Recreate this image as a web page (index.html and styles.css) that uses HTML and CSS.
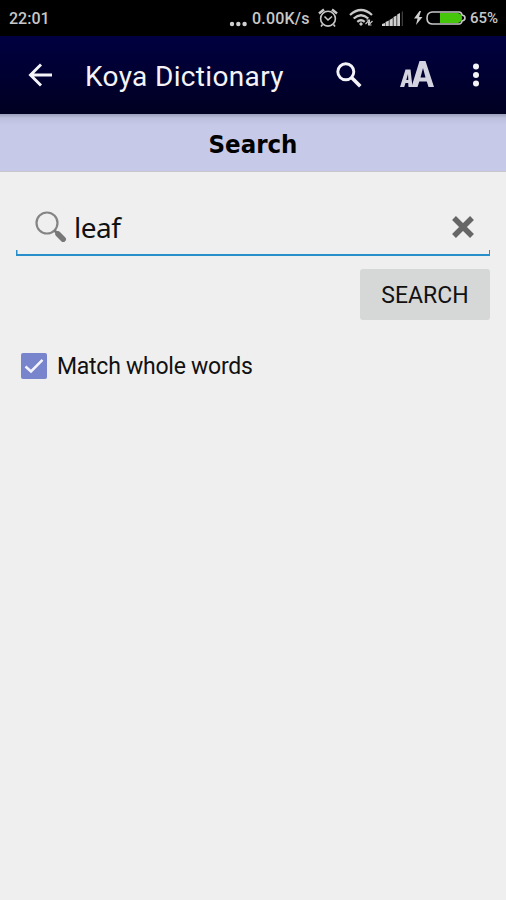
FILE: index.html
```html
<!DOCTYPE html>
<html lang="en">
    <head>
        <meta charset="utf-8">
        <title>Koya Dictionary</title>
        <link rel="stylesheet" href="styles.css">
    </head>
    <body>
        <div class="status">
            <span class="time">22:01</span>
            <svg class="dots" width="18" height="6" viewBox="0 0 18 6" fill="#d0d0d0">
                <circle cx="3" cy="3" r="2.2"/><circle cx="9.3" cy="3" r="2.2"/><circle cx="15.6" cy="3" r="2.2"/>
            </svg>
            <span class="speed">0.00K/s</span>
            <svg class="alarm" width="20" height="20" viewBox="0 0 20 20" fill="none" stroke="#c8c8c8" stroke-width="1.6">
                <circle cx="10" cy="10.7" r="7.4"/>
                <path d="M6.5 8.500l3.5 3.5 4-3.500M4.500 16.500L3 18.500M15.500 16.500l1.500 2"/>
                <path d="M1 5.500L6 1.500M19 5.500L14 1.500" stroke-width="2.500"/>
            </svg>
            <svg class="wifi" width="26" height="20" viewBox="0 0 26 20" fill="none" stroke="#c8c8c8" stroke-width="2.3">
                <path d="M1 7Q12 -3 23 7M4.7 10.5Q12 4 19.3 10.5M8.3 13.8Q12 10.7 15.7 13.8"/>
                <circle cx="12" cy="16" r="1.2" fill="#c8c8c8" stroke-width="1"/>
                <path d="M16.500 16l4-4M17.500 12h3v3M19.500 17l4-4M19.500 14v3h3" stroke-width="1.1"/>
            </svg>
            <svg class="signal" width="22" height="16" viewBox="0 0 22 16" fill="#d0d0d0">
                <path d="M0 15v-2l3-1v3zM3.500 15v-4l3.300-1.500V15zM7.500 15V9l3.300-2v8zM11.500 15V6l3-1.500V15zM15.200 15V3.500L18 2v13z"/>
                <path d="M19.7 15V1L21 0v15z" fill="#3c3c3c"/>
            </svg>
            <svg class="bolt" width="9" height="14" viewBox="0 0 9 14" fill="#d0d0d0"><path d="M5.5 0L0 7.5h3.5L2 14l6.5-8H5L7 0z"/></svg>
            <svg class="battery" width="40" height="14" viewBox="0 0 40 14">
                <path d="M14 2h18q4 1 4 5t-4 5H14z" fill="#45c60b"/>
                <path d="M6 1h27q2.5 0 3.2 3.3Q39 4.5 39 7t-2.8 2.7Q35.5 13 33 13H6Q1 12.5 1 7t5-6z" fill="none" stroke="#c8c8c8" stroke-width="1.6"/>
            </svg>
            <span class="percent">65%</span>
        </div>
        <div class="appbar">
            <svg class="back" width="24" height="24" viewBox="0 0 24 24" fill="none" stroke="#f4f4f8" stroke-width="2.9"><path d="M24 12H2.5M13 1.5L2.5 12 13 22.5"/></svg>
            <h1>Koya Dictionary</h1>
            <svg class="find" width="26" height="26" viewBox="0 0 26 26" fill="none" stroke="#f4f4f8">
                <circle cx="9.8" cy="9.8" r="8" stroke-width="2.9"/>
                <path d="M15.5 15.5l8.8 8.8" stroke-width="3.6"/>
            </svg>
            <svg class="size" width="34" height="26" viewBox="0 0 34 26" fill="#d4d4e0" fill-rule="evenodd">
                <path d="M0 26L5.5 8.5h5L12.5 26H8.500l-.3-4H5.5l-1.3 4zM6.300 19h2L8 13z"/>
                <path d="M11.5 26L19.500 0h6L34 26h-5.500l-1.700-5.500h-7.500L17.500 26zM20.500 16.500h5L23 7z"/>
            </svg>
            <svg class="more" width="8" height="24" viewBox="0 0 8 24" fill="#f4f4f8">
                <circle cx="4" cy="3.5" r="3"/><circle cx="4" cy="12" r="3"/><circle cx="4" cy="20.5" r="3"/>
            </svg>
        </div>
        <h2>Search</h2>
        <div class="content">
            <div class="field">
                <svg class="glass" width="32" height="32" viewBox="0 0 32 32" fill="none">
                    <circle cx="12" cy="12" r="10.5" stroke="#858585" stroke-width="2.2"/>
                    <path d="M19.5 19.5l3 3" stroke="#777" stroke-width="2.5"/>
                    <path d="M23 23l5.2 5.2" stroke="#777" stroke-width="5.5" stroke-linecap="round"/>
                </svg>
                <span class="word">leaf</span>
                <svg class="clear" width="22" height="22" viewBox="0 0 22 22" stroke="#666" stroke-width="5.4"><path d="M2 2l18 18M20 2L2 20"/></svg>
            </div>
            <button class="search">SEARCH</button>
            <div class="match">
                <svg class="check" width="26" height="26" viewBox="0 0 26 26">
                    <rect width="26" height="26" rx="2" fill="#7884cb"/>
                    <path d="M4.5 13.5l5.5 5L21.5 6.8" fill="none" stroke="#f4f4ff" stroke-width="2.5"/>
                </svg>
                <span>Match whole words</span>
            </div>
        </div>
    </body>
</html>
```
FILE: styles.css
```css
*{
    margin: 0;
    padding: 0;
    box-sizing: border-box;
}
body{
    min-height: 900px;
    background: #efefef;
    font-family: Roboto, sans-serif;
    color: #111;
}
svg{
    display: block;
    flex: none;
}
/* status bar */
.status{
    display: flex;
    align-items: center;
    height: 36px;
    padding-left: 9px;
    background: #000;
    color: #c8c8c8;
    font-size: 16px;
    font-weight: 500;
    white-space: nowrap;
}
.time{
    width: 220px;
}
.dots{
    margin-top: 12px;
}
.speed{
    width: 58px;
    margin-left: 5px;
    letter-spacing: 0.2px;
}
.alarm{
    margin-left: 8px;
}
.wifi{
    margin-left: 11px;
}
.signal{
    margin: 2px 0 0 7px;
}
.bolt{
    margin-left: 10px;
}
.battery{
    margin-left: 3px;
}
.percent{
    margin-left: 4px;
    font-size: 15px;
}
/* app bar */
.appbar{
    display: flex;
    align-items: center;
    height: 78px;
    padding-left: 28px;
    background: linear-gradient(#000041, #000022);
}
h1{
    width: 251px;
    margin: 3px 0 0 33px;
    color: #f4f4f8;
    font-size: 28px;
    font-weight: 400;
    line-height: 34px;
    letter-spacing: 0.35px;
    white-space: nowrap;
}
.size{
    margin: -3px 0 0 38px;
}
.more{
    margin-left: 38px;
}
h2{
    height: 58px;
    border-bottom: 1px solid #c8c8cc;
    background: linear-gradient(#9b9eb9, #bcbfdc 4px, #c6c9e8 11px);
    color: #000;
    font: bold condensed 25.5px/60px "DejaVu Sans", "DejaVu Sans Condensed", sans-serif;
    text-align: center;
}
.content{
    display: flex;
    flex-direction: column;
    padding: 27px 16px;
}
.field{
    display: flex;
    align-items: center;
    height: 57px;
    padding: 0 16px 0 19px;
    border-bottom: 2px solid #288fca;
    background: linear-gradient(#288fca, #288fca) left bottom / 1.5px 4px no-repeat,
        linear-gradient(#288fca, #288fca) right bottom / 1.5px 4px no-repeat;
}
.word{
    flex: 1;
    margin-left: 7px;
    font: 28px/38px "Noto Sans", sans-serif;
    letter-spacing: -0.5px;
}
.search{
    align-self: flex-end;
    width: 130px;
    height: 51px;
    margin-top: 13px;
    padding-top: 2px;
    border: 0;
    border-radius: 3px;
    background: #d6d7d7;
    color: #111;
    font: 23px Roboto, sans-serif;
}
.match{
    display: flex;
    align-items: center;
    gap: 10px;
    margin: 31px 0 0 5px;
    font-size: 23px;
    letter-spacing: -0.25px;
}
.match span{
    margin-top: 2px;
}
```
